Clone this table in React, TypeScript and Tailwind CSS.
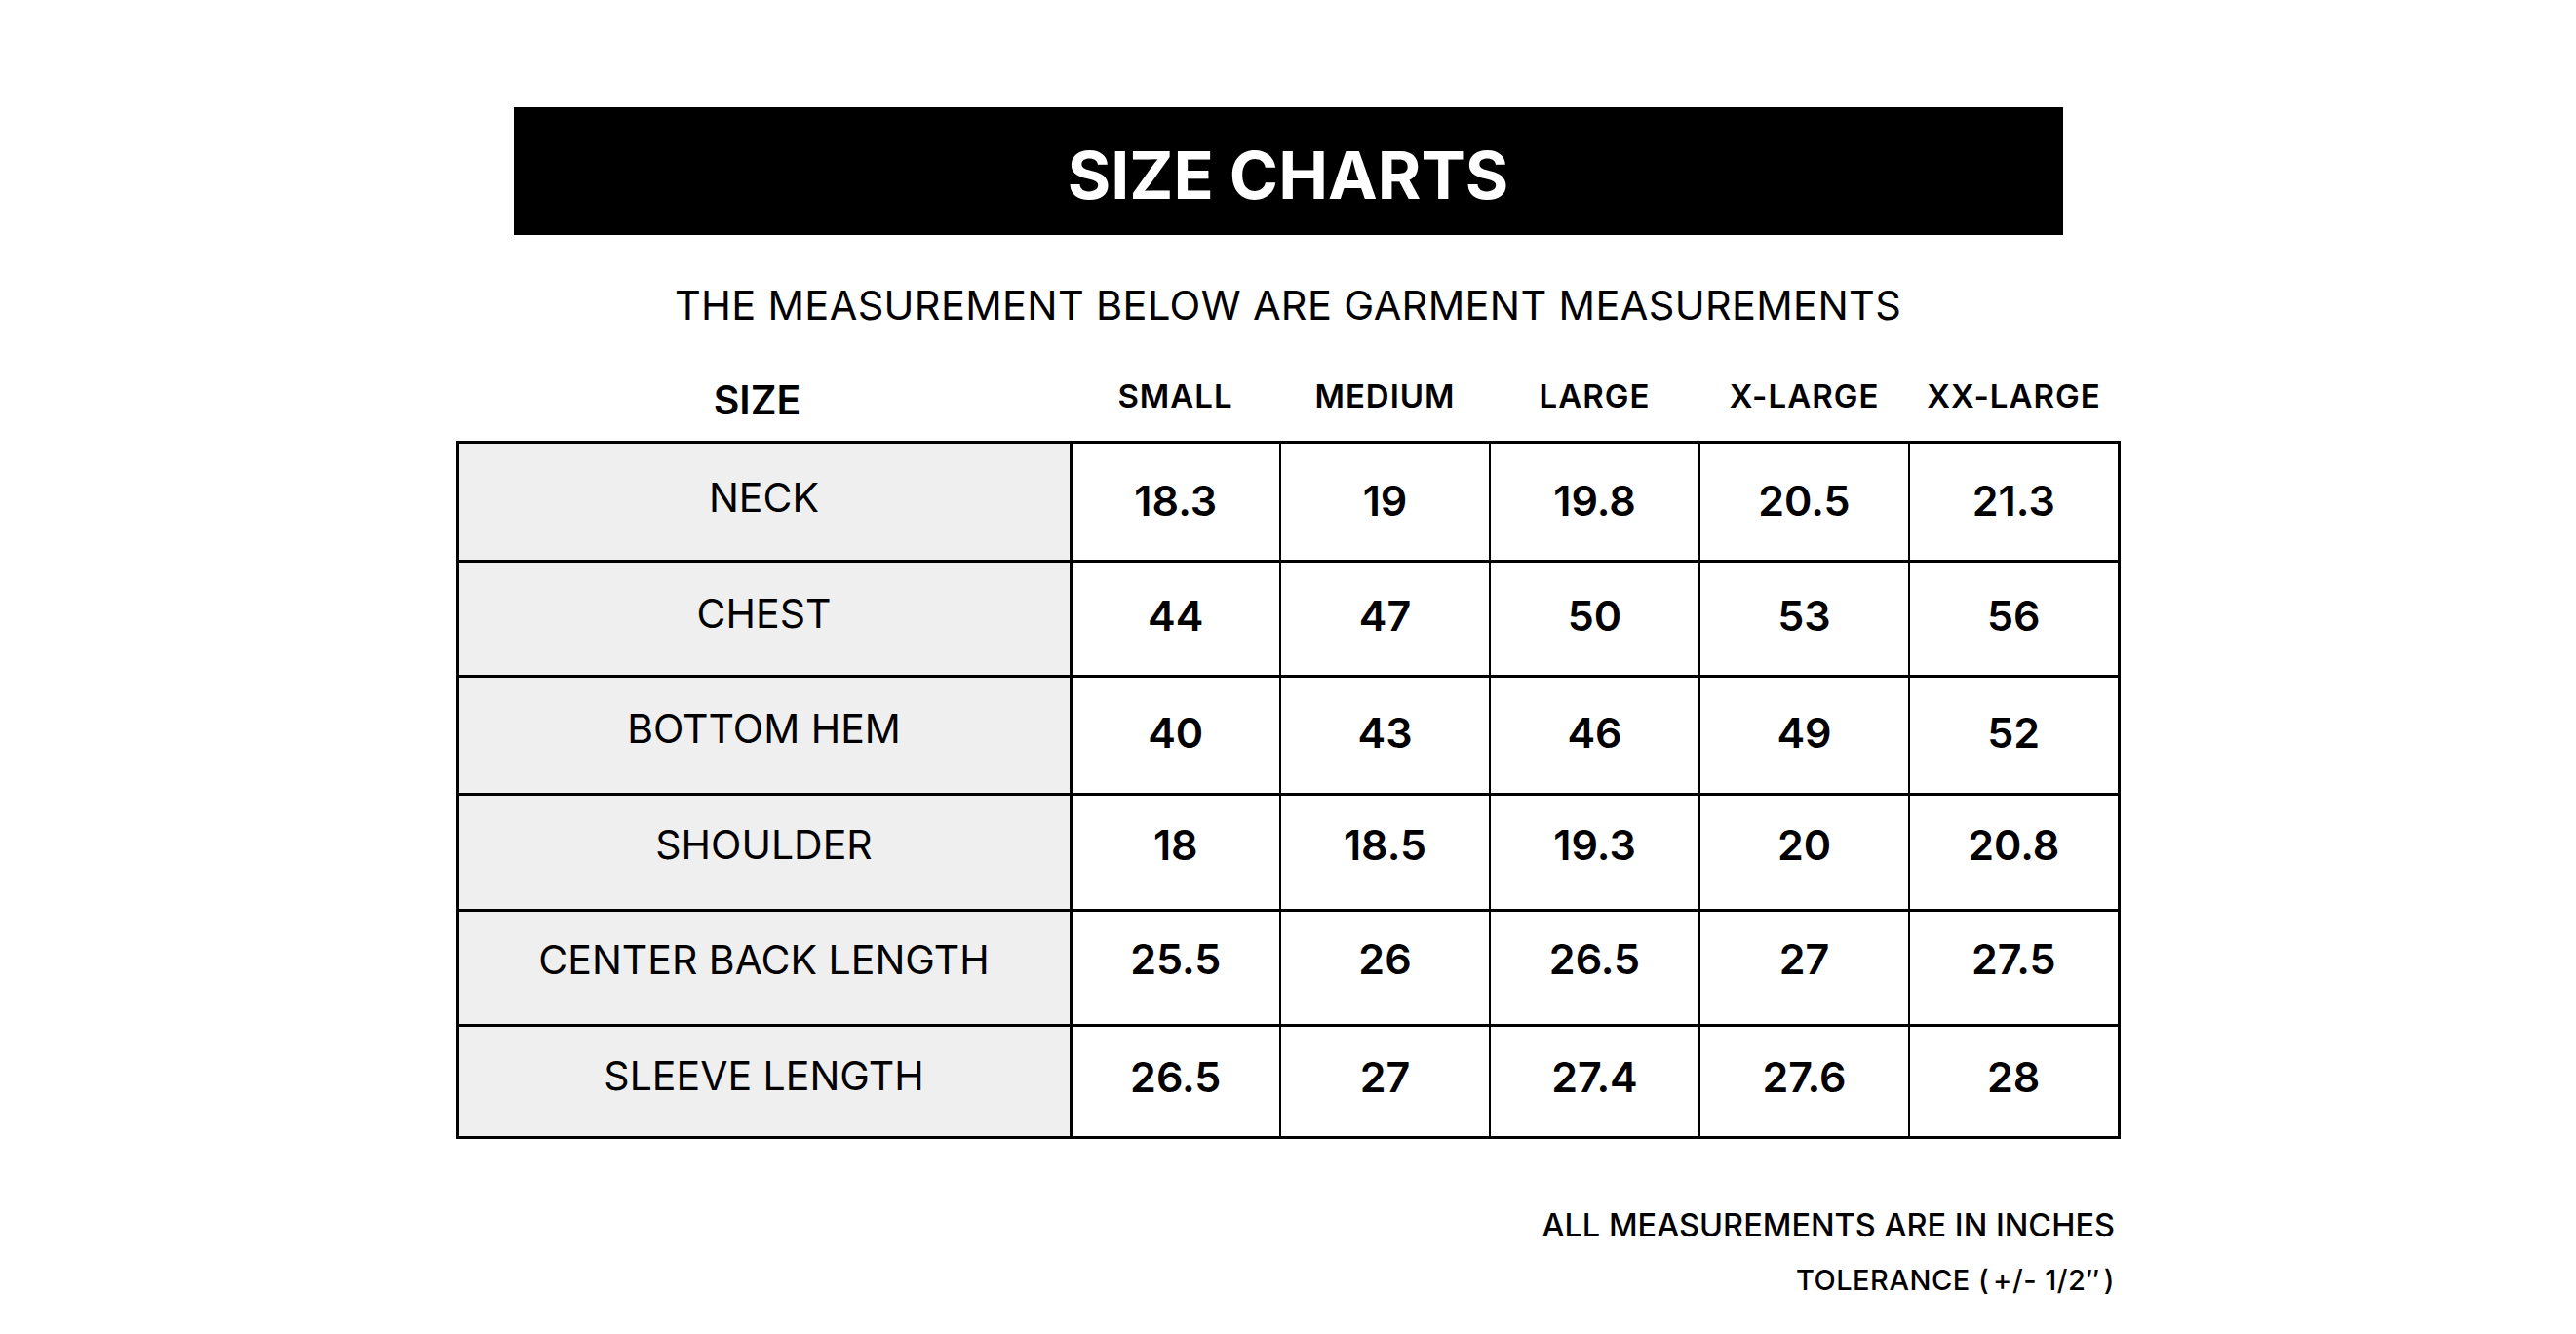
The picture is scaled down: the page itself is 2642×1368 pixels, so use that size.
const sizes = ['SMALL', 'MEDIUM', 'LARGE', 'X-LARGE', 'XX-LARGE']

// row heights and text nudges follow the uneven source chart
const rows: { label: string; values: string[]; h: string; lp: string; vp: string }[] = [
  { label: 'NECK', values: ['18.3', '19', '19.8', '20.5', '21.3'], h: 'h-[122px]', lp: 'pb-[8px]', vp: 'pb-[2px]' },
  { label: 'CHEST', values: ['44', '47', '50', '53', '56'], h: 'h-[118px]', lp: 'pb-[10px]', vp: 'pb-[6px]' },
  { label: 'BOTTOM HEM', values: ['40', '43', '46', '49', '52'], h: 'h-[121px]', lp: 'pb-[13px]', vp: 'pb-[4px]' },
  { label: 'SHOULDER', values: ['18', '18.5', '19.3', '20', '20.8'], h: 'h-[119px]', lp: 'pb-[15px]', vp: 'pb-[14px]' },
  { label: 'CENTER BACK LENGTH', values: ['25.5', '26', '26.5', '27', '27.5'], h: 'h-[118px]', lp: 'pb-[16px]', vp: 'pb-[18px]' },
  { label: 'SLEEVE LENGTH', values: ['26.5', '27', '27.4', '27.6', '28'], h: 'h-[115px]', lp: 'pb-[10px]', vp: 'pb-[8px]' },
]

export default function App() {
  return (
    <div className="w-full h-[1368px] bg-white text-black flex flex-col items-center font-['Inter','Noto_Sans',sans-serif]">
      <div className="mt-[110px] w-[1589px] h-[131px] bg-black flex items-center justify-center">
        <h1 className="text-[68px] font-bold text-white leading-none pt-[6px]">SIZE CHARTS</h1>
      </div>

      <p className="mt-[52px] text-[41.5px] leading-none tracking-[0.35px]">
        THE MEASUREMENT BELOW ARE GARMENT MEASUREMENTS
      </p>

      <div className="mt-[55px] w-[1704px] grid grid-cols-[629px_repeat(5,215px)] items-end">
        <div className="text-center text-[41px] font-semibold leading-none pr-[14px]">SIZE</div>
        {sizes.map((s) => (
          <div key={s} className="text-center text-[33px] font-semibold leading-none tracking-[1px] pb-[8px]">
            {s}
          </div>
        ))}
      </div>

      <table className="mt-[21px] w-[1704px] border-collapse border-[3px] border-black table-fixed">
        <colgroup>
          <col className="w-[629px]" />
          <col className="w-[215px]" />
          <col className="w-[215px]" />
          <col className="w-[215px]" />
          <col className="w-[215px]" />
          <col className="w-[215px]" />
        </colgroup>
        <tbody>
          {rows.map((r) => (
            <tr key={r.label} className={r.h}>
              <td className={`bg-[#efefef] border-[3px] border-black text-center text-[41px] leading-none ${r.lp}`}>
                {r.label}
              </td>
              {r.values.map((v, i) => (
                <td
                  key={i}
                  className={`border-x-2 border-y-[3px] border-black text-center text-[43px] font-semibold leading-none ${r.vp}`}
                >
                  {v}
                </td>
              ))}
            </tr>
          ))}
        </tbody>
      </table>

      <div className="mt-[73px] w-[1704px] flex flex-col items-end pr-[4px]">
        <p className="text-[32.5px] font-medium leading-none">ALL MEASUREMENTS ARE IN INCHES</p>
        <p className="mt-[25px] text-[29px] font-medium leading-none tracking-[0.5px]">
          TOLERANCE <span className="mr-[4px]">(</span>+/- 1/2″<span className="ml-[4px]">)</span>
        </p>
      </div>
    </div>
  )
}
